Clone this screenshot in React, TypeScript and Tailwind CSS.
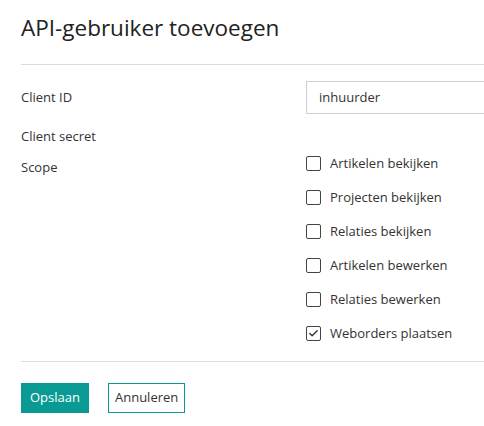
import { Check } from "lucide-react"

const scopes = [
  { label: "Artikelen bekijken", checked: false },
  { label: "Projecten bekijken", checked: false },
  { label: "Relaties bekijken", checked: false },
  { label: "Artikelen bewerken", checked: false },
  { label: "Relaties bewerken", checked: false },
  { label: "Weborders plaatsen", checked: true },
]

export default function App() {
  return (
    <div
      className="w-[484px] h-[426px] overflow-hidden bg-white text-[#333] text-[13px]"
      style={{ fontFamily: '"Open Sans", "Noto Sans", sans-serif' }}
    >
      <div className="w-[620px] pl-[21px]">
        <h1 className="pt-[13px] h-[64px] text-[22.5px] leading-[30px] font-normal text-[#222]">API-gebruiker toevoegen</h1>
        <div className="border-t border-[#dcdcdc]" />

        <div className="mt-[16px] flex h-[33px] items-center">
          <div className="w-[285px]">Client ID</div>
          <div className="flex-1 h-[33px] border border-[#cfcfcf] pl-[12px] flex items-center">inhuurder</div>
        </div>

        <div className="mt-[13px] flex h-[20px] items-center">
          <div className="w-[285px]">Client secret</div>
        </div>

        <div className="flex">
          <div className="w-[285px] h-[34px] pt-[7px] flex items-center">Scope</div>
          <ul className="flex flex-col">
            {scopes.map((s) => (
              <li key={s.label} className="h-[34px] flex items-center gap-[9px]">
                <span className="w-[15px] h-[15px] -mt-[2px] border-[1.5px] border-[#444] rounded-[2px] flex items-center justify-center">
                  {s.checked && <Check className="w-[11px] h-[11px] text-[#333]" strokeWidth={3} />}
                </span>
                <span>{s.label}</span>
              </li>
            ))}
          </ul>
        </div>

        <div className="mt-[10px] border-t border-[#dcdcdc]" />

        <div className="mt-[21px] flex gap-[19px]">
          <button className="h-[30px] px-[9px] bg-[#0a9a94] text-white">Opslaan</button>
          <button className="h-[30px] px-[6px] border border-[#0a9a94] text-[#333]">Annuleren</button>
        </div>
      </div>
    </div>
  )
}
